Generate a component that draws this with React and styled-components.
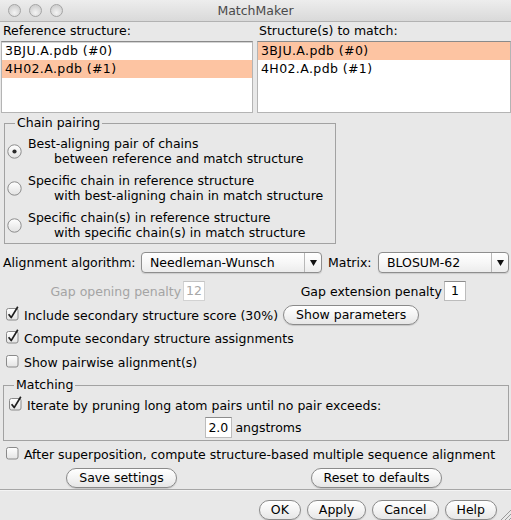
import styled, { createGlobalStyle } from 'styled-components'

const referenceItems = ['3BJU.A.pdb (#0)', '4H02.A.pdb (#1)']

const pairingOptions = [
  { first: 'Best-aligning pair of chains', second: 'between reference and match structure', on: true },
  { first: 'Specific chain in reference structure', second: 'with best-aligning chain in match structure' },
  { first: 'Specific chain(s) in reference structure', second: 'with specific chain(s) in match structure' },
]

const GlobalStyle = createGlobalStyle`
  html, body { margin: 0; padding: 0; background: #e8e8e8; }
  * { box-sizing: border-box; }
  body, button, input {
    font-family: "DejaVu Sans", "Liberation Sans", sans-serif;
    font-size: 12.5px; color: #000;
  }
`

function CheckBox({ checked }) {
  return (
    <CheckSvg width="14" height="15" viewBox="0 0 14 15">
      <defs>
        <linearGradient id="cbg" x1="0" y1="0" x2="0" y2="1">
          <stop offset="0" stopColor="#ffffff" />
          <stop offset="1" stopColor="#e4e4e4" />
        </linearGradient>
      </defs>
      <rect x="0.5" y="2.5" width="11.5" height="11.5" rx="2" fill="url(#cbg)" stroke="#8a8a8a" />
      {checked && (
        <path d="M2.6 8.2 L5.2 11.6 L11.8 0.8" fill="none" stroke="#1e1e1e" strokeWidth="1.7" strokeLinejoin="round" />
      )}
    </CheckSvg>
  )
}

function Radio({ on }) {
  return (
    <RadioSvg width="15" height="15" viewBox="0 0 15 15">
      <defs>
        <linearGradient id="rbg" x1="0" y1="0" x2="0" y2="1">
          <stop offset="0" stopColor="#ffffff" />
          <stop offset="1" stopColor="#e2e2e2" />
        </linearGradient>
      </defs>
      <circle cx="7.5" cy="7.5" r="6.7" fill="url(#rbg)" stroke="#8c8c8c" />
      {on && <circle cx="7.5" cy="7.5" r="2.1" fill="#2a2a2a" />}
    </RadioSvg>
  )
}

function Combo({ width, value }) {
  return (
    <ComboBox $width={width}>
      <ComboValue>{value}</ComboValue>
      <ComboArrow>
        <svg width="7" height="6" viewBox="0 0 7 6"><path d="M0 0 H7 L3.5 6 Z" fill="#111" /></svg>
      </ComboArrow>
    </ComboBox>
  )
}

export default function App() {
  return (
    <>
      <GlobalStyle />
      <Window>
        <TitleBar>
          <Lights>
            <Light /><Light /><Light />
          </Lights>
          <Title>MatchMaker</Title>
        </TitleBar>

        <Body>
          <ListsGrid>
            <div>
              <ListLabel>Reference structure:</ListLabel>
              <ListBox>
                {referenceItems.map((t, i) => <ListItem key={t} $selected={i === 1}>{t}</ListItem>)}
              </ListBox>
            </div>
            <div>
              <ListLabel>Structure(s) to match:</ListLabel>
              <ListBox>
                {referenceItems.map((t, i) => <ListItem key={t} $selected={i === 0}>{t}</ListItem>)}
              </ListBox>
            </div>
          </ListsGrid>

          <Group $ml={4} $width={332} $pl={2} $pt={6} $pb={3}>
            <Legend $ml={8}>Chain pairing</Legend>
            <Options>
              {pairingOptions.map(o => (
                <Option key={o.first}>
                  <Radio on={o.on} />
                  <OptionText>
                    <div>{o.first}</div>
                    <Indented>{o.second}</Indented>
                  </OptionText>
                </Option>
              ))}
            </Options>
          </Group>

          <AlignRow>
            <FieldLabel $width={138}>Alignment algorithm:</FieldLabel>
            <Combo width={181} value="Needleman-Wunsch" />
            <FieldLabel $width={56} $indent={6}>Matrix:</FieldLabel>
            <Combo width={131} value="BLOSUM-62" />
          </AlignRow>

          <GapRow>
            <GapField>
              <GapLabel $disabled>Gap opening penalty</GapLabel>
              <Entry $width={22} $disabled>12</Entry>
            </GapField>
            <GapField>
              <GapLabel>Gap extension penalty</GapLabel>
              <Entry $width={22} $align="right">1</Entry>
            </GapField>
          </GapRow>

          <CheckRow $mt={4} $pl={6}>
            <CheckBox checked />
            <span>Include secondary structure score (30%)</span>
            <PillButton $ml={5}>Show parameters</PillButton>
          </CheckRow>
          <CheckRow $mt={3} $pl={6}>
            <CheckBox checked />
            <span>Compute secondary structure assignments</span>
          </CheckRow>
          <CheckRow $mt={4} $pl={6}>
            <CheckBox />
            <span>Show pairwise alignment(s)</span>
          </CheckRow>

          <Group $ml={3} $mt={6} $width={506} $pl={5} $pt={3} $pb={2}>
            <Legend $ml={5}>Matching</Legend>
            <CheckRow $pl={0}>
              <CheckBox checked />
              <span>Iterate by pruning long atom pairs until no pair exceeds:</span>
            </CheckRow>
            <CutoffRow>
              <Entry $width={27} $height={21}>2.0</Entry>
              <span>angstroms</span>
            </CutoffRow>
          </Group>

          <CheckRow $mt={3} $pl={6}>
            <CheckBox />
            <span>After superposition, compute structure-based multiple sequence alignment</span>
          </CheckRow>

          <SettingsRow>
            <PillButton>Save settings</PillButton>
            <PillButton>Reset to defaults</PillButton>
          </SettingsRow>

          <Separator />

          <ActionRow>
            {['OK', 'Apply', 'Cancel', 'Help'].map(b => <PillButton key={b} $pad={11}>{b}</PillButton>)}
          </ActionRow>
        </Body>

        <Grip width="11" height="11" viewBox="0 0 11 11">
          <path d="M11 1 L1 11 M11 5 L5 11 M11 9 L9 11" stroke="#9a9a9a" strokeWidth="1" />
        </Grip>
      </Window>
    </>
  )
}

const Window = styled.div`
  position: relative; width: 511px; height: 520px; overflow: hidden;
  background: #e8e8e8;
`
const TitleBar = styled.div`
  height: 22px; display: grid; grid-template-columns: 1fr auto 1fr; align-items: center;
  background: linear-gradient(#ededed, #d9d9d9);
  border-bottom: 1px solid #b2b2b2;
`
const Lights = styled.div`display: flex; gap: 8px; padding-left: 8px;`
const Light = styled.span`
  width: 13px; height: 13px; border-radius: 50%;
  background: radial-gradient(circle at 50% 70%, #f4f4f4, #d2d2d2 70%);
  border: 1px solid #a4a4a4;
`
const Title = styled.div`color: #4a4a4a; line-height: 14px;`
const Body = styled.div`display: flex; flex-direction: column;`

const ListsGrid = styled.div`
  display: grid; grid-template-columns: 252px 254px; gap: 4px; padding-left: 1px;
`
const ListLabel = styled.div`padding: 2px 0 0 2px; line-height: 14px;`
const ListBox = styled.div`
  margin-top: 3px; height: 72px; background: #fff;
  border: 1px solid #b4b4b4; border-top-color: #8a8a8a;
  box-shadow: inset 0 1px 0 #d4d4d4;
`
const ListItem = styled.div`
  height: 18px; line-height: 18px; padding-left: 3px; letter-spacing: 0.4px;
  background: ${p => p.$selected ? '#fdc4a2' : 'transparent'};
`
const Group = styled.fieldset`
  margin: ${p => p.$mt ?? 3}px 0 0 ${p => p.$ml}px; width: ${p => p.$width}px; min-width: 0;
  padding: ${p => p.$pt}px 2px ${p => p.$pb}px ${p => p.$pl}px;
  border: 1px solid #a2a2a2;
`
const Legend = styled.legend`
  margin-left: ${p => p.$ml}px; padding: 0 2px; line-height: 14px;
`
const Options = styled.div`display: flex; flex-direction: column; gap: 7px;`
const Option = styled.div`display: flex; align-items: center;`
const RadioSvg = styled.svg`flex: none; margin-right: 6px;`
const OptionText = styled.div`line-height: 15px; white-space: nowrap;`
const Indented = styled.div`padding-left: 26px;`

const AlignRow = styled.div`
  margin-top: 8px; height: 21px; display: flex; align-items: center; padding-left: 3px;
`
const FieldLabel = styled.span`width: ${p => p.$width}px; padding-left: ${p => p.$indent || 0}px; white-space: nowrap;`
const ComboBox = styled.div`
  width: ${p => p.$width}px; height: 21px; display: flex; flex: none;
  border: 1px solid #8e8e8e; border-radius: 4px;
  background: linear-gradient(#ffffff, #f6f6f6 55%, #ececec);
  box-shadow: 0 1px 1px rgba(0,0,0,0.12);
`
const ComboValue = styled.span`flex: 1; padding-left: 8px; line-height: 19px;`
const ComboArrow = styled.span`
  width: 17px; border-left: 1px solid #b8b8b8;
  display: flex; align-items: center; justify-content: center;
`

const GapRow = styled.div`
  margin-top: 8px; display: grid; grid-template-columns: 1fr 1fr; justify-items: center;
`
const GapField = styled.div`display: flex; align-items: center; gap: 2px;`
const GapLabel = styled.span`color: ${p => p.$disabled ? '#a4a4a4' : '#000'};`
const Entry = styled.span`
  width: ${p => p.$width}px; height: ${p => p.$height || 20}px;
  line-height: ${p => (p.$height || 20) - 2}px;
  padding: 0 ${p => p.$align === 'right' ? 6 : 2}px;
  text-align: ${p => p.$align || 'left'};
  background: #fff;
  color: ${p => p.$disabled ? '#a8a8a8' : '#000'};
  border: 1px solid ${p => p.$disabled ? '#d2d2d2' : '#bcbcbc'};
  border-top-color: ${p => p.$disabled ? '#c4c4c4' : '#8c8c8c'};
`

const CheckRow = styled.div`
  margin-top: ${p => p.$mt || 0}px; height: 20px;
  display: flex; align-items: center; padding-left: ${p => p.$pl}px;
  white-space: nowrap;
`
const CheckSvg = styled.svg`flex: none; margin: -3px 4px 0 0;`

const CutoffRow = styled.div`
  margin-top: 2px; display: flex; align-items: center; justify-content: center; gap: 3px;
  padding-right: 8px;
`

const PillButton = styled.button`
  height: 20px; padding: 0 ${p => p.$pad || 12}px; margin-left: ${p => p.$ml || 0}px;
  border: 1px solid #8a8a8a; border-radius: 10px;
  background: linear-gradient(#ffffff, #f4f4f4 50%, #e6e6e6 100%);
  box-shadow: 0 1px 1px rgba(0,0,0,0.15);
  line-height: 18px; white-space: nowrap;
`
const SettingsRow = styled.div`
  margin-top: 4px; display: grid; grid-template-columns: 243px 243px; gap: 12px; justify-items: center;
`
const Separator = styled.div`margin-top: 1px; height: 1px; background: #a6a6a6; border-bottom: 1px solid #f4f4f4; box-sizing: content-box;`
const ActionRow = styled.div`
  margin-top: 9px; display: flex; justify-content: flex-end; gap: 6px; padding-right: 14px;
`
const Grip = styled.svg`position: absolute; right: 0; bottom: 0;`
